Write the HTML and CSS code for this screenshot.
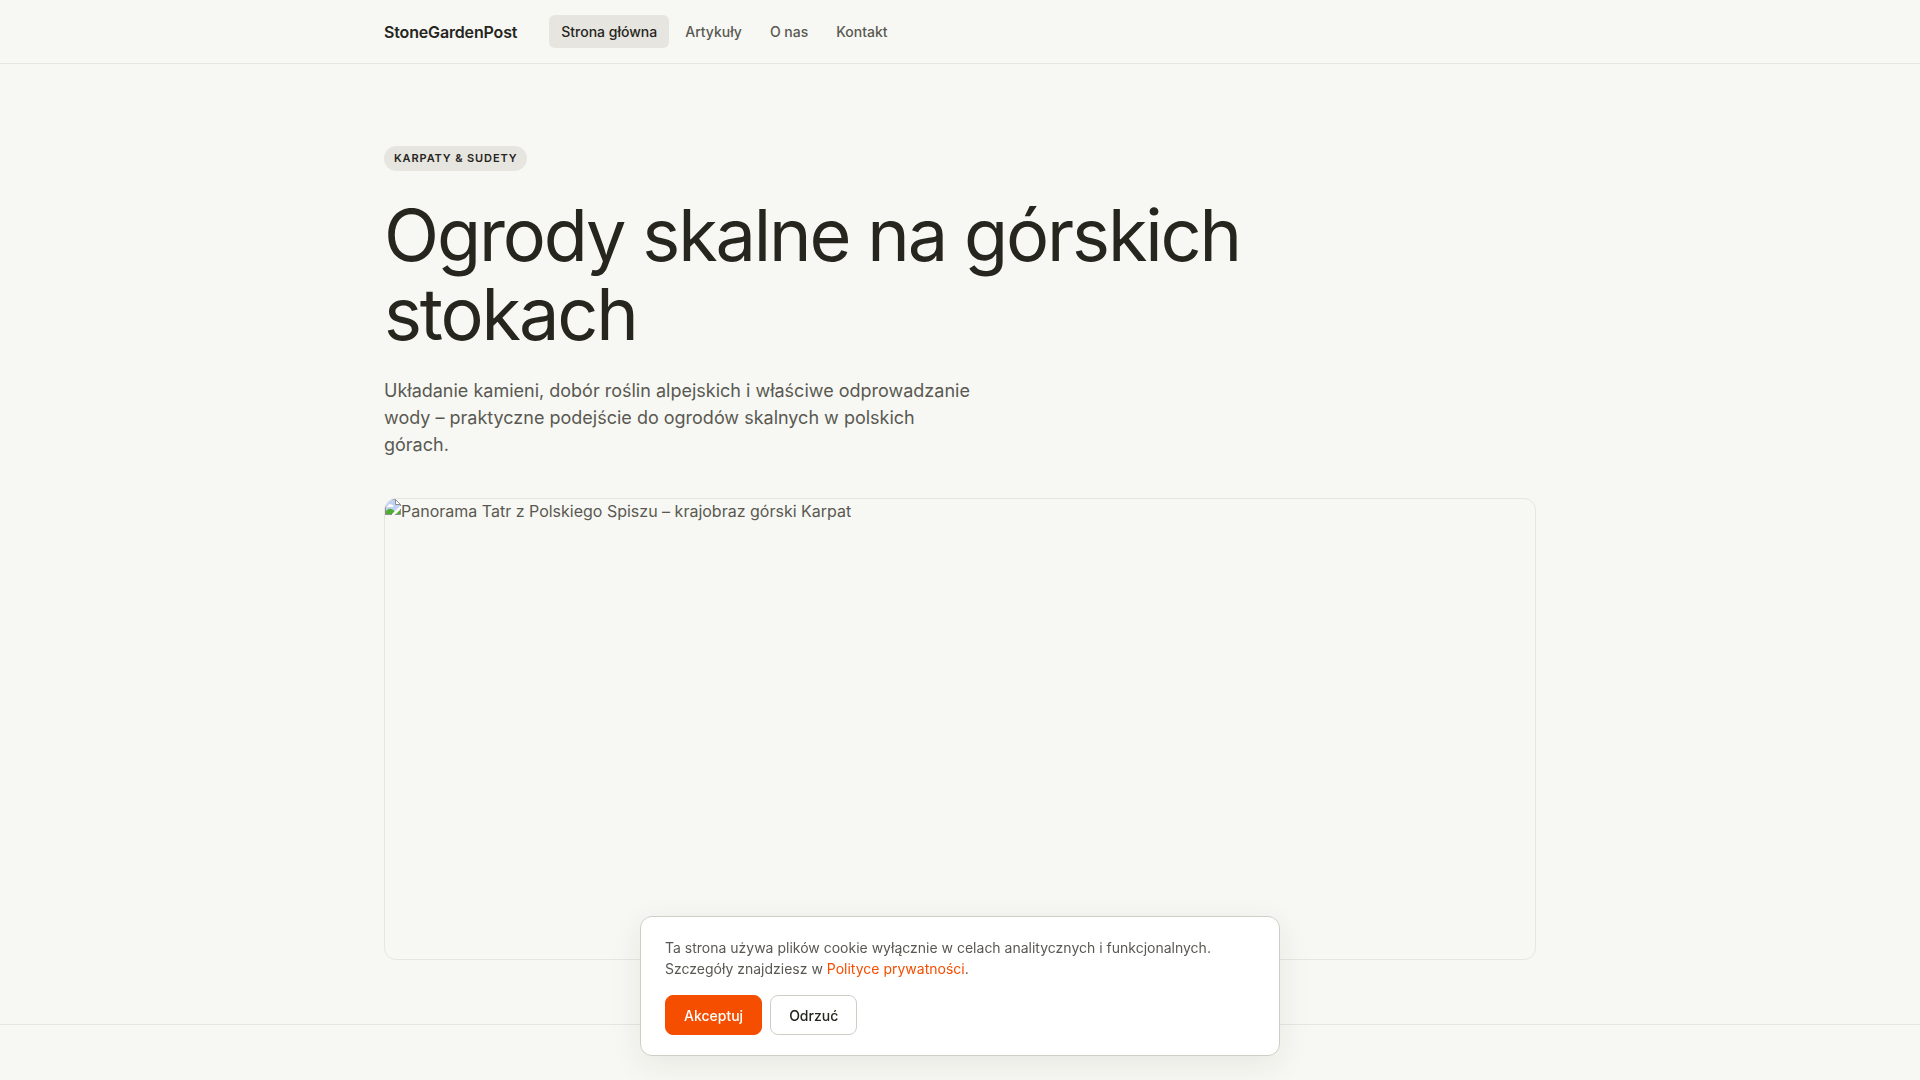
FILE: index.html
```html
<!DOCTYPE html>
<html lang="pl">
<head>
    <meta charset="UTF-8" />
    <meta name="viewport" content="width=device-width, initial-scale=1.0" />
    <title>StoneGardenPost</title>
    <link rel="stylesheet" href="styles.css">
</head>
<body>
    <header class="site-header">
        <div class="container header-inner">
            <a href="#" class="brand">StoneGardenPost</a>
            <nav class="nav">
                <a href="#" class="active">Strona główna</a>
                <a href="#">Artykuły</a>
                <a href="#">O nas</a>
                <a href="#">Kontakt</a>
            </nav>
        </div>
    </header>
    <main>
        <section class="hero">
            <div class="container">
                <span class="tag">Karpaty &amp; Sudety</span>
                <h1>Ogrody skalne na górskich stokach</h1>
                <p class="lead">Układanie kamieni, dobór roślin alpejskich i właściwe odprowadzanie wody – praktyczne podejście do ogrodów skalnych w polskich górach.</p>
                <figure class="hero-image">
                    <svg class="image-icon" viewBox="0 0 16 16" width="16" height="16" aria-hidden="true">
                        <path d="M0 0h11l5 5v3l-8 8H0z" fill="#fff" />
                        <path d="M1 1h10v4h4v3l-7 7H1z" fill="#c0d2f4" />
                        <path d="M3 7c0-2 3-3 4-1 2 0 2 2 0 2H3C1 8 1 7 3 7z" fill="#fff" />
                        <path d="M1 15v-3c3-3 6-3 9 1l-2 2z" fill="#4fae32" />
                        <path d="M16 6v3l-7 7H6z" fill="#fff" />
                        <path d="M15 11v4h-4z" fill="#4fae32" />
                        <path d="M.5 16V.5h10l5 5V7M10.5.5v5h5M0 15.5h7M15.5 10v5.5H10" fill="none" stroke="#8f8f8f" />
                    </svg>
                    <figcaption>Panorama Tatr z Polskiego Spiszu – krajobraz górski Karpat</figcaption>
                </figure>
            </div>
        </section>
        <section class="articles"></section>
    </main>
    <aside class="cookie-banner" aria-label="Cookies">
        <p>Ta strona używa plików cookie wyłącznie w celach analitycznych i funkcjonalnych. Szczegóły znajdziesz w <a href="#">Polityce prywatności</a>.</p>
        <div class="cookie-actions">
            <button type="button" class="btn btn-primary">Akceptuj</button>
            <button type="button" class="btn">Odrzuć</button>
        </div>
    </aside>
</body>
</html>
```
FILE: styles.css
```css
:root {
    --bg: #f7f8f3;
    --ink: #26251e;
    --muted: #5a5852;
    --line: #e6e5e0;
    --line-strong: #cfcdc4;
    --accent: #f54e00;
}
* {
    box-sizing: border-box;
}
body {
    margin: 0;
    background-color: var(--bg);
    color: var(--ink);
    font-family: 'Inter', sans-serif;
    font-size: 16px;
    line-height: 24px;
    -webkit-font-smoothing: antialiased;
}
a {
    color: inherit;
    text-decoration: none;
}
.container {
    max-width: 1200px;
    margin: 0 auto;
    padding: 0 24px;
}
.site-header {
    border-bottom: 1px solid var(--line);
}
.header-inner {
    display: flex;
    align-items: center;
    gap: 32px;
    min-height: 63px;
}
.brand {
    font-weight: 600;
    letter-spacing: -0.01em;
}
.nav {
    display: flex;
    gap: 4px;
}
.nav a {
    padding: 6px 12px;
    border-radius: 6px;
    color: var(--muted);
    font-size: 14px;
    font-weight: 500;
    line-height: 21px;
}
.nav a.active {
    background-color: var(--line);
    color: var(--ink);
}
.hero {
    padding: 80px 0 64px;
}
.tag {
    display: inline-block;
    padding: 4px 10px;
    border-radius: 999px;
    background-color: var(--line);
    font-size: 11px;
    font-weight: 600;
    line-height: 17px;
    letter-spacing: 0.08em;
    text-transform: uppercase;
}
h1 {
    max-width: 900px;
    margin: 24px 0;
    font-size: 72px;
    font-weight: 400;
    line-height: 1.1;
    letter-spacing: -0.03em;
}
.lead {
    max-width: 600px;
    margin: 0 0 40px;
    color: var(--muted);
    font-size: 18px;
    line-height: 27px;
}
.hero-image {
    display: flex;
    align-items: flex-start;
    box-sizing: content-box;
    aspect-ratio: 5 / 2;
    margin: 0;
    border: 1px solid var(--line);
    border-radius: 12px;
    color: var(--muted);
    overflow: hidden;
}
.image-icon {
    flex-shrink: 0;
}
.articles {
    padding: 24px 0;
    border-top: 1px solid var(--line);
}
.cookie-banner {
    position: fixed;
    right: 24px;
    bottom: 24px;
    left: 24px;
    max-width: 640px;
    margin: 0 auto;
    padding: 20px 24px;
    border: 1px solid var(--line-strong);
    border-radius: 12px;
    background-color: #fff;
    box-shadow: 0 8px 32px rgba(38, 37, 30, 0.08);
    font-size: 14px;
    line-height: 21px;
}
.cookie-banner p {
    margin: 0 0 16px;
    color: var(--muted);
}
.cookie-banner p a {
    color: var(--accent);
}
.cookie-actions {
    display: flex;
    gap: 8px;
}
.btn {
    height: 40px;
    padding: 0 18px;
    border: 1px solid var(--line-strong);
    border-radius: 8px;
    background-color: #fff;
    color: var(--ink);
    font-family: inherit;
    font-size: 14px;
    font-weight: 500;
    cursor: pointer;
}
.btn-primary {
    border-color: var(--accent);
    background-color: var(--accent);
    color: #fff;
}
```
